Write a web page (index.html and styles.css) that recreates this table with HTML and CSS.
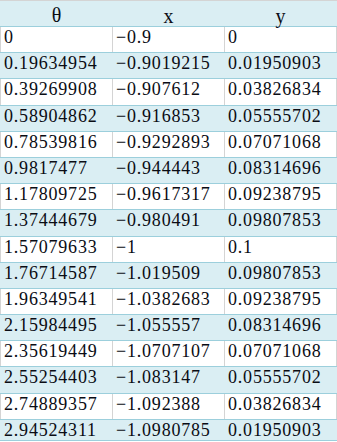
FILE: index.html
```html
<!DOCTYPE html>
<html>
<head>
<meta charset="utf-8">
<link rel="stylesheet" href="styles.css">
</head>
<body>
<div class="sheet">
  <div class="row head"><div class="c">θ</div><div class="c">x</div><div class="c">y</div></div>
  <div class="row"><div class="c">0</div><div class="c">−0.9</div><div class="c">0</div></div>
  <div class="row alt"><div class="c">0.19634954</div><div class="c">−0.9019215</div><div class="c">0.01950903</div></div>
  <div class="row"><div class="c">0.39269908</div><div class="c">−0.907612</div><div class="c">0.03826834</div></div>
  <div class="row alt"><div class="c">0.58904862</div><div class="c">−0.916853</div><div class="c">0.05555702</div></div>
  <div class="row"><div class="c">0.78539816</div><div class="c">−0.9292893</div><div class="c">0.07071068</div></div>
  <div class="row alt"><div class="c">0.9817477</div><div class="c">−0.944443</div><div class="c">0.08314696</div></div>
  <div class="row"><div class="c">1.17809725</div><div class="c">−0.9617317</div><div class="c">0.09238795</div></div>
  <div class="row alt"><div class="c">1.37444679</div><div class="c">−0.980491</div><div class="c">0.09807853</div></div>
  <div class="row"><div class="c">1.57079633</div><div class="c">−1</div><div class="c">0.1</div></div>
  <div class="row alt"><div class="c">1.76714587</div><div class="c">−1.019509</div><div class="c">0.09807853</div></div>
  <div class="row"><div class="c">1.96349541</div><div class="c">−1.0382683</div><div class="c">0.09238795</div></div>
  <div class="row alt"><div class="c">2.15984495</div><div class="c">−1.055557</div><div class="c">0.08314696</div></div>
  <div class="row"><div class="c">2.35619449</div><div class="c">−1.0707107</div><div class="c">0.07071068</div></div>
  <div class="row alt"><div class="c">2.55254403</div><div class="c">−1.083147</div><div class="c">0.05555702</div></div>
  <div class="row"><div class="c">2.74889357</div><div class="c">−1.092388</div><div class="c">0.03826834</div></div>
  <div class="row alt last"><div class="c">2.94524311</div><div class="c">−1.0980785</div><div class="c">0.01950903</div></div>
</div>
</body>
</html>
```

FILE: styles.css
```css
html, body {
  margin: 0;
  padding: 0;
  background: #ffffff;
}

.sheet {
  width: 337px;
  border-top: 1px solid #d4d4d4;
  font-family: "Liberation Serif", "DejaVu Serif", serif;
  font-size: 18px;
  letter-spacing: 0.8px;
  color: #0a0c14;
}

.row {
  display: grid;
  grid-template-columns: 112px 112px 113px;
  box-sizing: border-box;
  height: 26.2px;
  border-bottom: 1px solid #9ccfdc;
  background: #ffffff;
}

.row .c {
  box-sizing: border-box;
  padding: 1px 0 0 3px;
  line-height: 19px;
  white-space: nowrap;
  overflow: hidden;
  border-left: 1px solid #d4d4d4;
}

.row .c:last-child {
  border-right: 1px solid #d4d4d4;
}

.row.alt,
.row.head {
  background: #daeef3;
}

.row.alt .c,
.row.head .c {
  border-color: #daeef3;
}

.row.head {
  height: 26px;
}

.row.head .c {
  text-align: center;
  padding: 5px 0 0 0;
  font-size: 20px;
  line-height: 18px;
  letter-spacing: 0;
  overflow: visible;
}

.row.head .c + .c {
  padding-top: 6px;
}

.row.last {
  height: 21px;
}
```
